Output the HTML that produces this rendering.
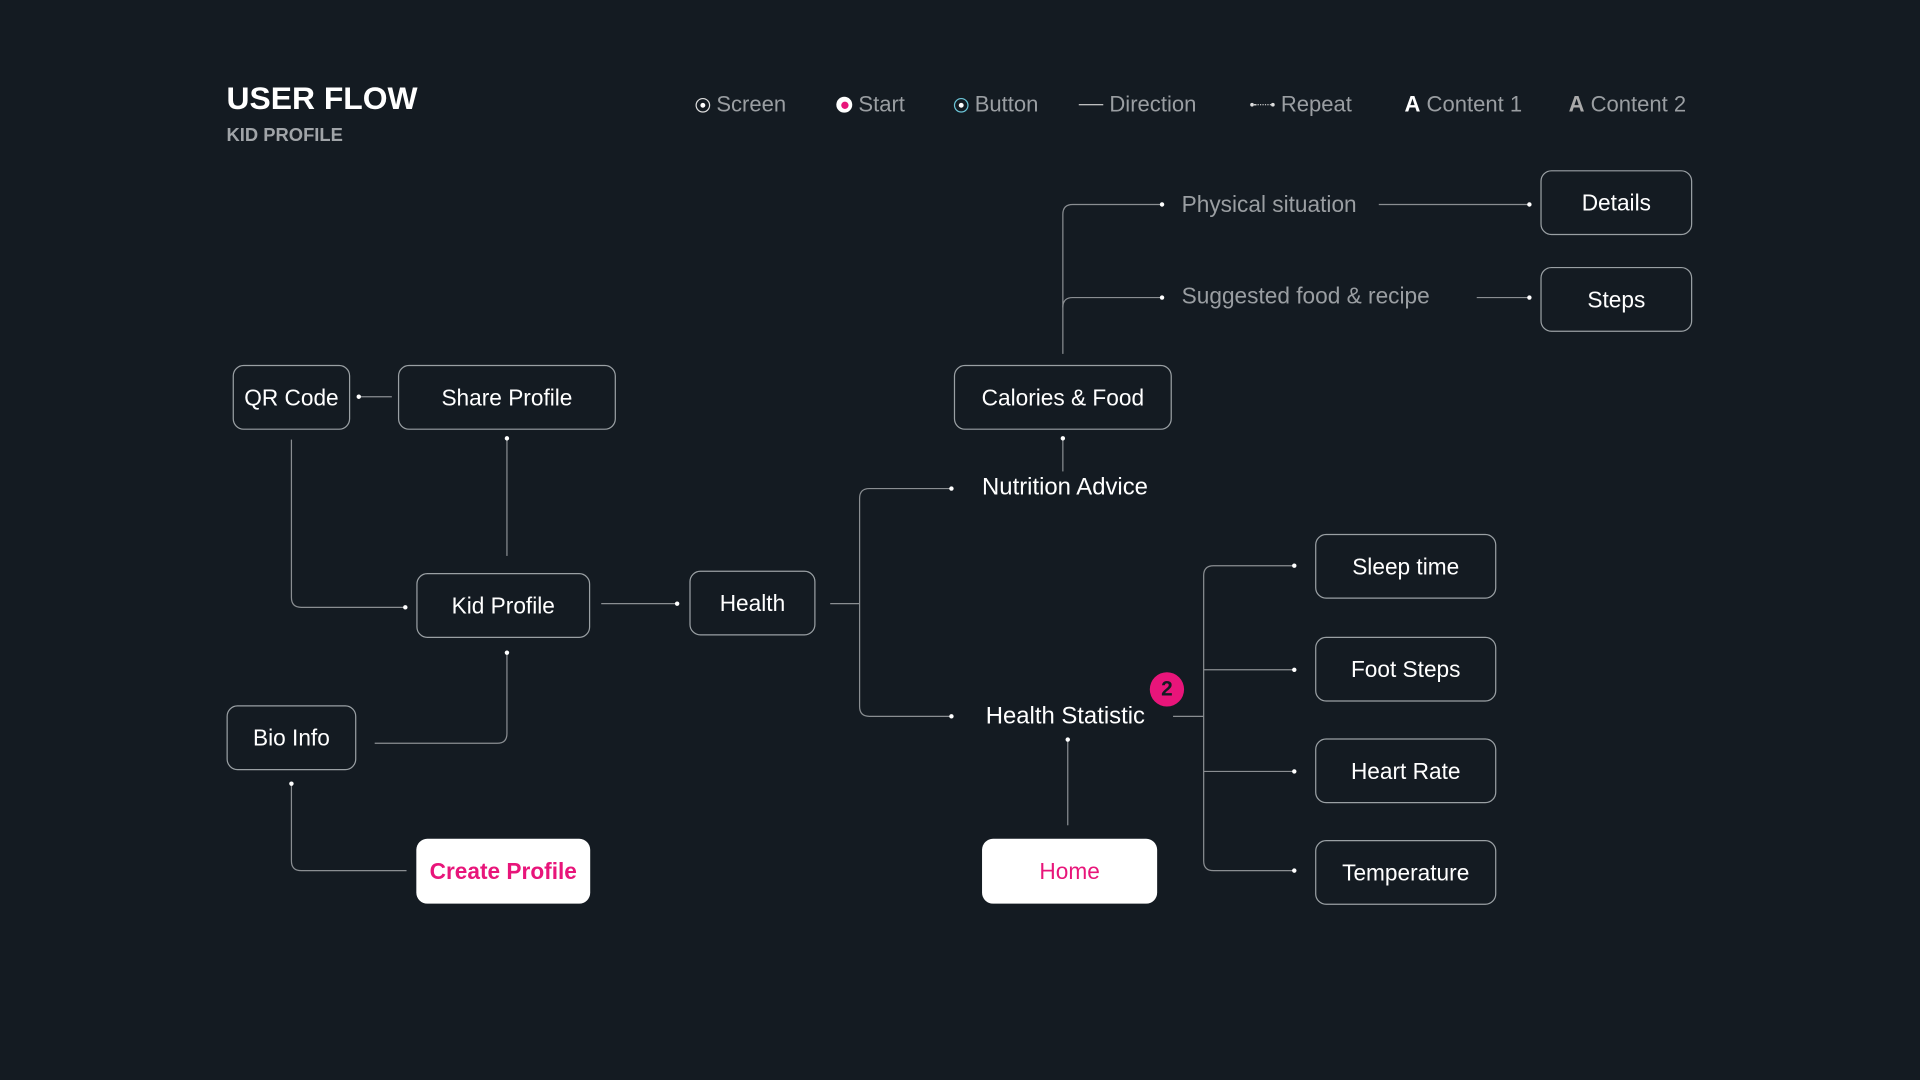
<!DOCTYPE html>
<html><head><meta charset="utf-8"><style>
html,body{margin:0;padding:0;background:#141b22;width:1920px;height:1080px;overflow:hidden}
#c{position:absolute;left:0;top:0;width:1568px;height:882px;transform:scale(1.22449);transform-origin:0 0;font-family:"Liberation Sans",sans-serif}
.b{position:absolute;box-sizing:border-box;border:1px solid #9aa0a4;border-radius:9px;color:#fff;font-size:18.5px;display:flex;align-items:center;justify-content:center}
.w{background:#fff;border:none;color:#e8157a;font-weight:bold}
.t{position:absolute;font-size:19.5px;white-space:nowrap;line-height:20px}
.lg{position:absolute;top:75px;font-size:18px;color:#9a9ea2;white-space:nowrap}
svg{position:absolute;left:0;top:0}
</style></head><body><div id="c">
<div style="position:absolute;left:185px;top:65px;font-size:26px;font-weight:bold;color:#fff">USER FLOW</div>
<div style="position:absolute;left:185px;top:102px;font-size:15px;font-weight:bold;color:#a0a4a8">KID PROFILE</div>

<div class="lg" style="left:568px"><span style="display:inline-block;width:10px;height:10px;border:1.5px solid #ddd;border-radius:50%;vertical-align:-1px;position:relative"><span style="position:absolute;left:3px;top:3px;width:4px;height:4px;background:#fff;border-radius:50%"></span></span> Screen</div>
<div class="lg" style="left:683px"><span style="display:inline-block;width:13px;height:13px;background:#fff;border-radius:50%;vertical-align:-1px;position:relative"><span style="position:absolute;left:3.5px;top:3.5px;width:6px;height:6px;background:#e8157a;border-radius:50%"></span></span> Start</div>
<div class="lg" style="left:779px"><span style="display:inline-block;width:10px;height:10px;border:1.5px solid #6cc6d8;border-radius:50%;vertical-align:-1px;position:relative"><span style="position:absolute;left:3px;top:3px;width:4px;height:4px;background:#fff;border-radius:50%"></span></span> Button</div>
<div class="lg" style="left:881px"><span style="display:inline-block;width:20px;height:1.5px;background:#ccc;vertical-align:5px"></span> Direction</div>
<div class="lg" style="left:1021px"><span style="display:inline-block;width:3px;height:3px;background:#ddd;border-radius:50%;vertical-align:4px"></span><span style="display:inline-block;width:14px;border-top:1.5px dotted #ccc;vertical-align:5px"></span><span style="display:inline-block;width:3px;height:3px;background:#ddd;border-radius:50%;vertical-align:4px"></span> Repeat</div>
<div class="lg" style="left:1147px"><b style="color:#fff">A</b> Content 1</div>
<div class="lg" style="left:1281px"><b style="color:#aaa">A</b> Content 2</div>

<svg width="1568" height="882" fill="none" stroke="#8a8e92" stroke-width="1">
<path d="M293 324H320"/>
<path d="M238 359V488Q238 496 246 496H331"/>
<path d="M414 358V454"/>
<path d="M491 493H553"/>
<path d="M414 533V599Q414 607 406 607H306"/>
<path d="M238 640V703Q238 711 246 711H332"/>
<path d="M678 493H702"/>
<path d="M777 399H710Q702 399 702 407V577Q702 585 710 585H777"/>
<path d="M868 358V385"/>
<path d="M868 289V175Q868 167 876 167H949"/>
<path d="M868 251Q868 243 876 243H949"/>
<path d="M1126 167H1249"/>
<path d="M1206 243H1249"/>
<path d="M872 604V674"/>
<path d="M958 585H983"/>
<path d="M1057 462H991Q983 462 983 470V703Q983 711 991 711H1057"/>
<path d="M983 547H1057M983 630H1057"/>
<g fill="#fff" stroke="none">
<circle cx="293" cy="324" r="1.8"/><circle cx="331" cy="496" r="1.8"/><circle cx="414" cy="358" r="1.8"/><circle cx="553" cy="493" r="1.8"/><circle cx="414" cy="533" r="1.8"/><circle cx="238" cy="640" r="1.8"/><circle cx="777" cy="399" r="1.8"/><circle cx="777" cy="585" r="1.8"/><circle cx="868" cy="358" r="1.8"/><circle cx="949" cy="167" r="1.8"/><circle cx="949" cy="243" r="1.8"/><circle cx="1249" cy="167" r="1.8"/><circle cx="1249" cy="243" r="1.8"/><circle cx="872" cy="604" r="1.8"/><circle cx="1057" cy="462" r="1.8"/><circle cx="1057" cy="547" r="1.8"/><circle cx="1057" cy="630" r="1.8"/><circle cx="1057" cy="711" r="1.8"/>
</g>
</svg>

<div class="b" style="left:190px;top:298px;width:96px;height:53px">QR Code</div>
<div class="b" style="left:325px;top:298px;width:178px;height:53px">Share Profile</div>
<div class="b" style="left:340px;top:468px;width:142px;height:53px">Kid Profile</div>
<div class="b" style="left:563px;top:466px;width:103px;height:53px">Health</div>
<div class="b" style="left:185px;top:576px;width:106px;height:53px">Bio Info</div>
<div class="b w" style="left:340px;top:685px;width:142px;height:53px">Create Profile</div>
<div class="b" style="left:779px;top:298px;width:178px;height:53px">Calories &amp; Food</div>
<div class="b" style="left:1258px;top:139px;width:124px;height:53px">Details</div>
<div class="b" style="left:1258px;top:218px;width:124px;height:53px">Steps</div>
<div class="b" style="left:1074px;top:436px;width:148px;height:53px">Sleep time</div>
<div class="b" style="left:1074px;top:520px;width:148px;height:53px">Foot Steps</div>
<div class="b" style="left:1074px;top:603px;width:148px;height:53px">Heart Rate</div>
<div class="b" style="left:1074px;top:686px;width:148px;height:53px">Temperature</div>
<div class="b w" style="left:802px;top:685px;width:143px;height:53px;font-weight:normal">Home</div>

<div class="t" style="left:802px;top:388px;color:#fff">Nutrition Advice</div>
<div class="t" style="left:805px;top:575px;color:#fff">Health Statistic</div>
<div class="t" style="left:965px;top:157px;color:#9a9ea2;font-size:18.5px">Physical situation</div>
<div class="t" style="left:965px;top:232px;color:#9a9ea2;font-size:18.5px">Suggested food &amp; recipe</div>
<div style="position:absolute;left:939px;top:549px;width:28px;height:28px;border-radius:50%;background:#e8157a;color:#141b22;font-weight:bold;font-size:17px;display:flex;align-items:center;justify-content:center">2</div>
</div></body></html>
